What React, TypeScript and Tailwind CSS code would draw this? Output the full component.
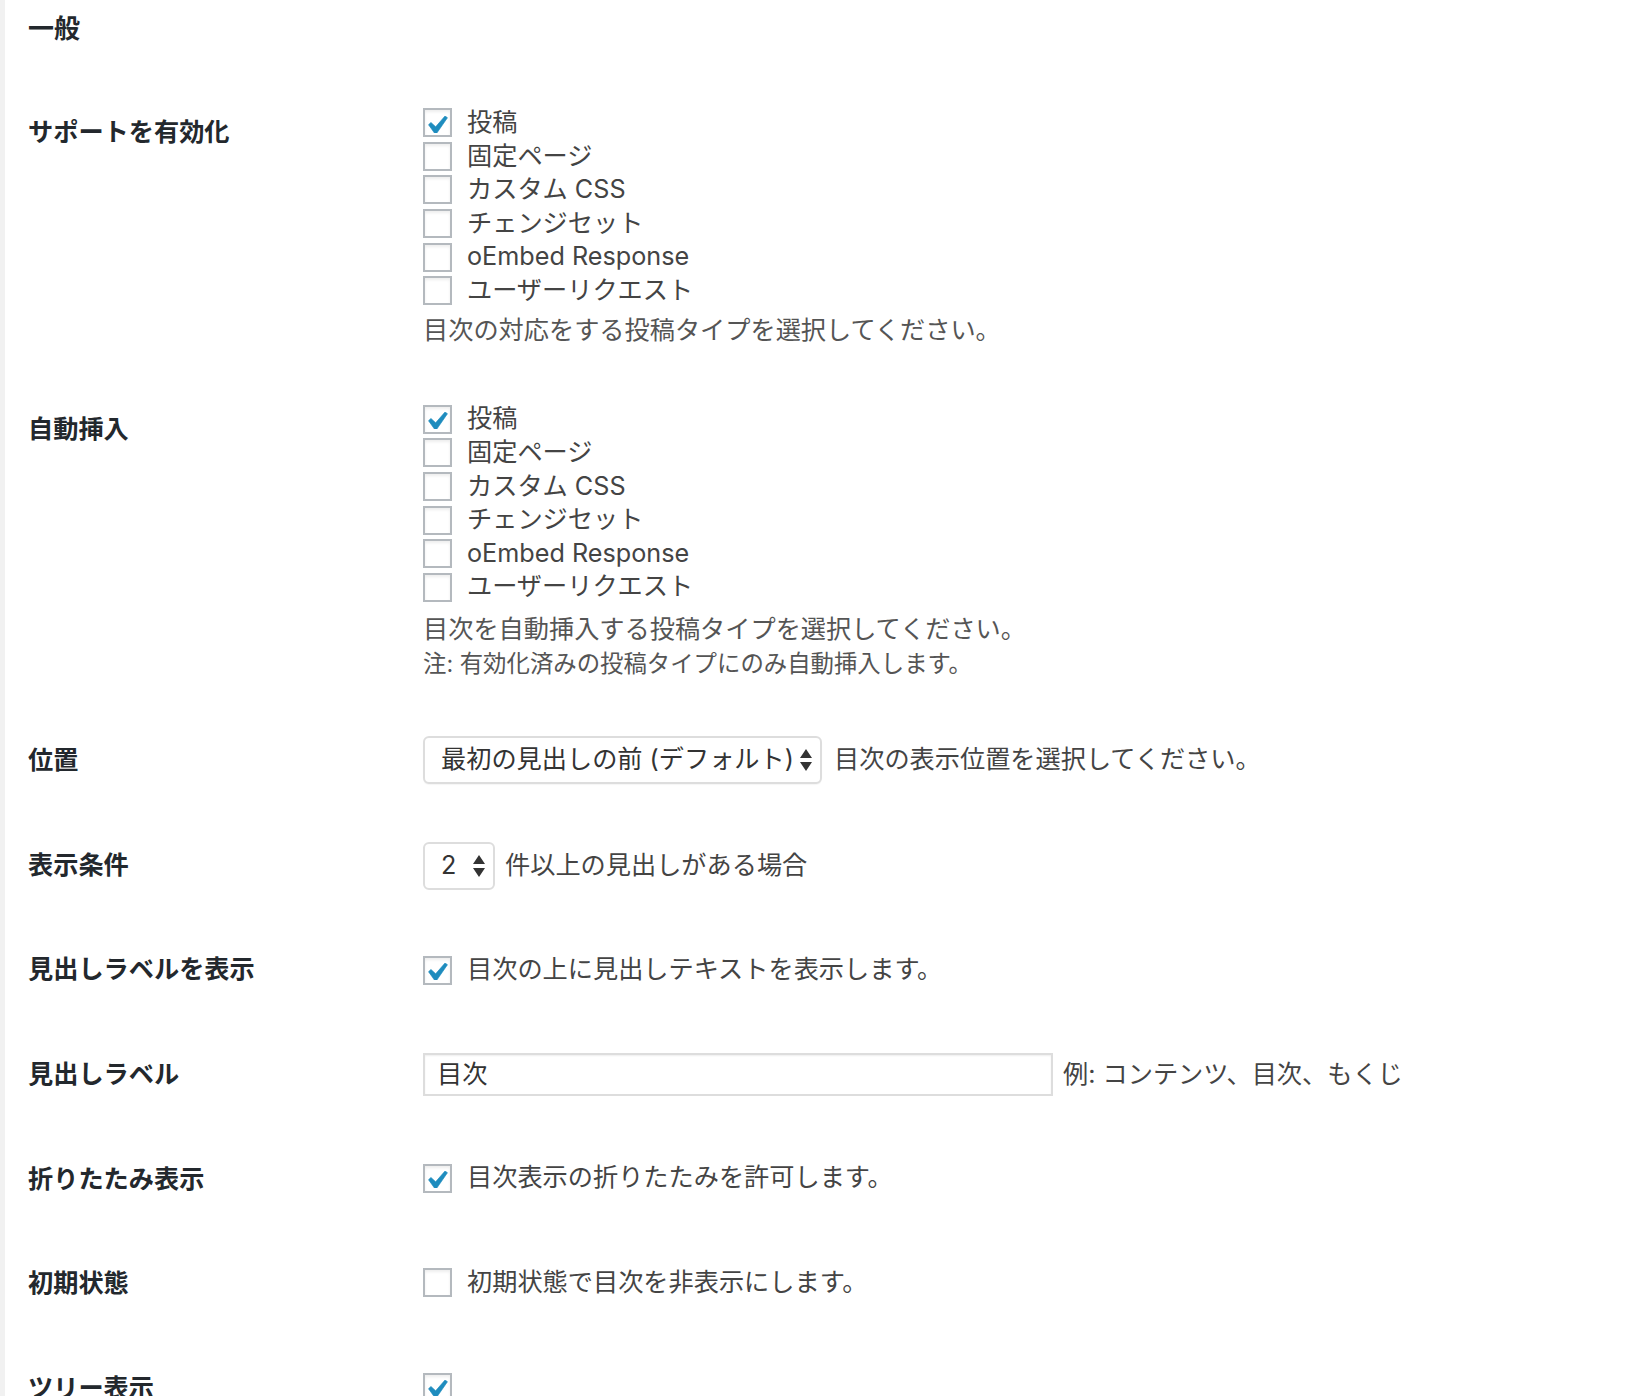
import type { ReactNode } from "react";

const supportTypes = [
  { label: "投稿", checked: true },
  { label: "固定ページ", checked: false },
  { label: "カスタム CSS", checked: false },
  { label: "チェンジセット", checked: false },
  { label: "oEmbed Response", checked: false },
  { label: "ユーザーリクエスト", checked: false },
];

function Check({ checked }: { checked?: boolean }) {
  return (
    <span className="flex h-[29px] w-[29px] shrink-0 items-center justify-center border-2 border-[#b4b9be] bg-white pt-[3px] shadow-[inset_0_2px_3px_rgba(0,0,0,0.07)]">
      {checked && (
        <svg width="20" height="17" viewBox="5.78 4.89 10.39 9.32" className="text-[#1e8cbe]">
          <path fill="currentColor" stroke="currentColor" strokeWidth="0.35" strokeLinejoin="round" d="M14.83 4.89l1.34.94-5.81 8.38H9.02L5.78 9.67l1.34-1.25 2.57 2.4z" />
        </svg>
      )}
    </span>
  );
}

function Arrows() {
  return (
    <svg width="12" height="22" viewBox="0 0 12 22" className="shrink-0 text-[#333]">
      <path fill="currentColor" d="M6 0L12 9H0z M0 13H12L6 22z" />
    </svg>
  );
}

function CheckLine({ label, checked }: { label: string; checked?: boolean }) {
  return (
    <label className="flex h-[33.6px] items-center gap-[15px]">
      <Check checked={checked} />
      <span>{label}</span>
    </label>
  );
}

function Row({ label, children, single }: { label: string; children: ReactNode; single?: boolean }) {
  return (
    <div className={single ? "flex h-[104.6px]" : "flex"}>
      <div className="w-[395px] shrink-0 pt-[38px] text-[25.2px] leading-[34px] font-bold text-[#23282d]">{label}</div>
      <div className="flex-1">{children}</div>
    </div>
  );
}

export default function App() {
  return (
    <div className="flex h-screen overflow-hidden bg-white font-['Inter','Noto_Sans_CJK_JP',sans-serif] text-[25.2px] text-[#444]">
      <div className="w-[5px] shrink-0 bg-[#f1f1f1]" />
      <div className="flex-1 pl-[23px]">
        <h2 className="pt-[12px] text-[26px] font-bold leading-[34px] text-[#23282d]">一般</h2>

        <div className="mt-[31px]">
          <Row label="サポートを有効化">
            <div className="pt-[29px] pb-[27px]">
              {supportTypes.map(t => <CheckLine key={t.label} label={t.label} checked={t.checked} />)}
              <p className="mt-[5px] leading-[34px] text-[#555]">目次の対応をする投稿タイプを選択してください。</p>
            </div>
          </Row>

          <Row label="自動挿入">
            <div className="pt-[29px] pb-[26px]">
              {supportTypes.map(t => <CheckLine key={t.label} label={t.label} checked={t.checked} />)}
              <p className="mt-[8px] leading-[34px] text-[#555]">目次を自動挿入する投稿タイプを選択してください。</p>
              <p className="mt-[3px] text-[23.4px] leading-[30px] text-[#555]">注: 有効化済みの投稿タイプにのみ自動挿入します。</p>
            </div>
          </Row>

          <Row label="位置" single>
            <div className="flex items-center pt-[31px]">
              <div className="flex h-[48px] w-[399px] items-center justify-between rounded-[6px] border-2 border-[#ddd] bg-white pl-[16px] pr-[8px] text-[#333] shadow-[0_1px_1px_rgba(0,0,0,0.04)]">
                <span>最初の見出しの前 (デフォルト)</span>
                <Arrows />
              </div>
              <span className="ml-[12px]">目次の表示位置を選択してください。</span>
            </div>
          </Row>

          <Row label="表示条件" single>
            <div className="flex items-center pt-[32px]">
              <div className="flex h-[48px] w-[72px] items-center justify-between rounded-[6px] border-2 border-[#ddd] bg-white pl-[16px] pr-[8px] text-[#333]">
                <span>2</span>
                <Arrows />
              </div>
              <span className="ml-[10px]">件以上の見出しがある場合</span>
            </div>
          </Row>

          <Row label="見出しラベルを表示" single>
            <div className="pt-[39px]">
              <CheckLine label="目次の上に見出しテキストを表示します。" checked />
            </div>
          </Row>

          <Row label="見出しラベル" single>
            <div className="flex items-center pt-[34px]">
              <div className="flex h-[43px] w-[630px] items-center border-2 border-[#ddd] bg-white pl-[12px] text-[#333] shadow-[inset_0_1px_2px_rgba(0,0,0,0.07)]">
                目次
              </div>
              <span className="ml-[10px]">例: コンテンツ、目次、もくじ</span>
            </div>
          </Row>

          <Row label="折りたたみ表示" single>
            <div className="pt-[38px]">
              <CheckLine label="目次表示の折りたたみを許可します。" checked />
            </div>
          </Row>

          <Row label="初期状態" single>
            <div className="pt-[38px]">
              <CheckLine label="初期状態で目次を非表示にします。" />
            </div>
          </Row>

          <Row label="ツリー表示" single>
            <div className="pt-[38px]">
              <CheckLine label="" checked />
            </div>
          </Row>
        </div>
      </div>
    </div>
  );
}
